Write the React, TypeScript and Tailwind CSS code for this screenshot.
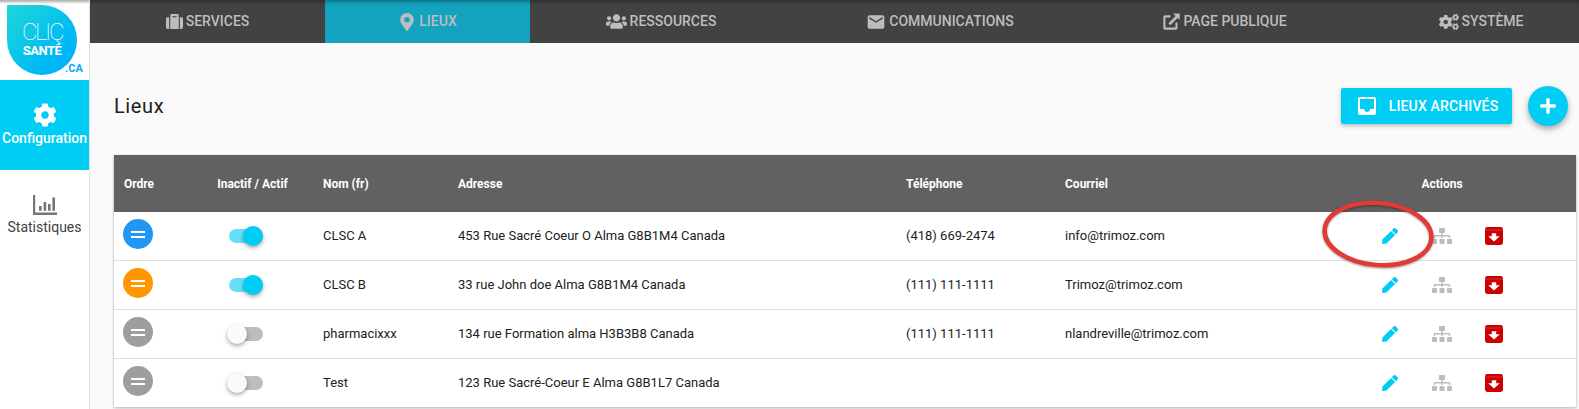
import React from "react";
import { FaSuitcase, FaMapMarkerAlt, FaUsers, FaCogs, FaCog, FaSitemap, FaPen, FaPlus } from "react-icons/fa";
import { MdEmail, MdInbox } from "react-icons/md";

const ExternalIcon = () => (
  <svg width="17" height="17" viewBox="0 0 16 16" fill="none" className="shrink-0">
    <path d="M7 3.2H2.2a.9.9 0 0 0-.9.9v9.7c0 .5.4.9.9.9h9.6c.5 0 .9-.4.9-.9V9" stroke="currentColor" strokeWidth="2" />
    <path d="M6 10.5 13.5 3" stroke="currentColor" strokeWidth="2.6" />
    <path d="M9.5 .4h6.2v6.2z" fill="currentColor" />
  </svg>
);

const StatsIcon = () => (
  <svg width="24" height="20" viewBox="0 0 24 20" className="text-[#757575]" fill="currentColor">
    <path d="M0 0h2.2v17.4H24V20H0z" />
    <path d="M6 11h2.6v4.8H6zM10.6 7h2.6v8.8h-2.6zM15 9h2.6v6.8H15zM19.4 2.5H22v13.3h-2.6z" />
  </svg>
);

const ArchiveIcon = () => (
  <svg width="18" height="18" viewBox="0 0 18 18" className="shrink-0">
    <rect width="18" height="18" rx="2.4" fill="#cc0000" />
    <path d="M6.8 6.2h4.4v3h3.6L9 14.6 3.2 9.2h3.6z" fill="#fff" />
    <path d="M0 3h18" stroke="#e06060" strokeWidth="0.5" />
  </svg>
);

const navItems = [
  { label: "SERVICES", icon: <FaSuitcase size={17} />, w: "w-[235px]" },
  { label: "LIEUX", icon: <FaMapMarkerAlt size={18} />, w: "w-[205px]", active: true },
  { label: "RESSOURCES", icon: <FaUsers size={21} />, w: "w-[262px]" },
  { label: "COMMUNICATIONS", icon: <MdEmail size={20} />, w: "w-[296px]" },
  { label: "PAGE PUBLIQUE", icon: <ExternalIcon />, w: "w-[274px]" },
  { label: "SYSTÈME", icon: <FaCogs size={20} />, w: "w-[238px]" },
];

const rows = [
  { color: "bg-[#2196f3]", on: true, name: "CLSC A", addr: "453 Rue Sacré Coeur O Alma G8B1M4 Canada", tel: "(418) 669-2474", mail: "info@trimoz.com" },
  { color: "bg-[#ff9800]", on: true, name: "CLSC B", addr: "33 rue John doe Alma G8B1M4 Canada", tel: "(111) 111-1111", mail: "Trimoz@trimoz.com" },
  { color: "bg-[#9e9e9e]", on: false, name: "pharmacixxx", addr: "134 rue Formation alma H3B3B8 Canada", tel: "(111) 111-1111", mail: "nlandreville@trimoz.com" },
  { color: "bg-[#9e9e9e]", on: false, name: "Test", addr: "123 Rue Sacré-Coeur E Alma G8B1L7 Canada", tel: "", mail: "" },
];

const cols = "grid grid-cols-[86px_105px_153px_448px_159px_299px_156px_56px] items-center";

const Toggle = ({ on }: { on: boolean }) => (
  <div className="relative ml-[29px] h-[14px] w-[34px] rounded-full">
    <div className={`h-[14px] w-[34px] rounded-full ${on ? "bg-[#66e0f7]" : "bg-[#bdbdbd]"}`} />
    <div
      className={`absolute top-[-3px] h-[20px] w-[20px] rounded-full shadow-[0_2px_4px_rgba(0,0,0,0.35)] ${
        on ? "right-0 bg-[#00cdf3]" : "left-[-2px] bg-[#fafafa]"
      }`}
    />
  </div>
);

export default function App() {
  return (
    <div className="flex h-[409px] w-[1579px] overflow-hidden bg-[#fafafa] font-['Roboto',sans-serif] text-[#212121]">
      <aside className="flex w-[90px] shrink-0 flex-col border-r border-[#e0e0e0] bg-white">
        <div className="relative h-[80px] shrink-0">
          <div className="absolute left-[7px] top-[5px] flex h-[70px] w-[70px] flex-col items-center rounded-full rounded-tl-none bg-gradient-to-br from-[#1fd8d8] to-[#00aaff] pt-[15px] text-white">
            <span className="text-[24px] font-thin leading-[24px] tracking-[-2.4px]">CLIÇ</span>
            <span className="text-[13px] font-bold leading-[13px] tracking-[-0.5px]">SANTÉ</span>
          </div>
          <span className="absolute left-[65px] top-[63px] text-[11px] font-bold leading-[12px] text-[#00aaff]">.CA</span>
          <div className="absolute inset-x-0 top-0 h-[4px] bg-gradient-to-b from-[#00000055] to-transparent" />
        </div>
        <div className="flex h-[90px] shrink-0 flex-col items-center bg-[#00cdf3] pt-[23px] text-white">
          <FaCog size={24} />
          <span className="mt-[1px] text-[14px] font-medium leading-[20px]">Configuration</span>
        </div>
        <div className="flex flex-col items-center pt-[25px]">
          <StatsIcon />
          <span className="mt-[3px] text-[14px] leading-[18px] text-[#424242]">Statistiques</span>
        </div>
      </aside>

      <main className="min-w-0 flex-1">
        <nav className="flex h-[43px] bg-[#424242] shadow-[inset_0_4px_4px_-3px_rgba(0,0,0,0.45)]">
          {navItems.map((n) => (
            <div
              key={n.label}
              className={`flex shrink-0 items-center justify-center gap-[3px] text-[14px] font-medium text-[#bdbdbd] ${n.w} ${
                n.active ? "bg-[#14a3bf] shadow-[inset_0_4px_4px_-3px_rgba(0,0,0,0.45)]" : ""
              }`}
            >
              {n.icon}
              <span>{n.label}</span>
            </div>
          ))}
        </nav>

        <div className="pl-[24px] pr-[3px]">
          <div className="flex h-[112px] items-center justify-between pt-[14px]">
            <h1 className="text-[20px] leading-[28px] tracking-[0.6px]">Lieux</h1>
            <div className="flex items-center gap-[16px] pr-[8px]">
              <button className="flex h-[36px] w-[171px] items-center justify-center gap-[10px] rounded-[2px] bg-[#00cdf3] text-[14px] font-medium tracking-[0.15px] text-white shadow-[0_2px_4px_rgba(0,0,0,0.25)]">
                <MdInbox size={24} />
                <span>LIEUX ARCHIVÉS</span>
              </button>
              <button className="flex h-[40px] w-[40px] items-center justify-center rounded-full bg-[#00cdf3] text-white shadow-[0_3px_6px_rgba(0,0,0,0.35)]">
                <FaPlus size={18} />
              </button>
            </div>
          </div>

          <div className="bg-white shadow-[0_1px_3px_rgba(0,0,0,0.3)]">
            <div className={`${cols} h-[57px] bg-[#616161] text-[12px] font-bold text-white`}>
              <div className="pl-[10px]">Ordre</div>
              <div className="text-center">Inactif / Actif</div>
              <div className="pl-[18px]">Nom (fr)</div>
              <div>Adresse</div>
              <div>Téléphone</div>
              <div>Courriel</div>
              <div className="text-center">Actions</div>
              <div />
            </div>
            {rows.map((r, i) => (
              <div key={r.name} className={`${cols} text-[13px] ${i < rows.length - 1 ? "h-[49px] border-b border-[#e0e0e0]" : "h-[48px]"}`}>
                <div className="pl-[9px]">
                  <div className={`mb-[4px] flex h-[30px] w-[30px] flex-col items-center justify-center gap-[3px] rounded-full ${r.color}`}>
                    <span className="h-[2px] w-[14px] bg-white" />
                    <span className="h-[2px] w-[14px] bg-white" />
                  </div>
                </div>
                <div><Toggle on={r.on} /></div>
                <div className="pl-[18px]">{r.name}</div>
                <div>{r.addr}</div>
                <div>{r.tel}</div>
                <div>{r.mail}</div>
                <div className="grid grid-cols-3 items-center justify-items-center">
                  <FaPen size={16} className="text-[#00cdf3]" />
                  <FaSitemap size={20} className="text-[#bdbdbd]" />
                  <ArchiveIcon />
                </div>
                <div />
              </div>
            ))}
          </div>
        </div>
      </main>

      <svg className="pointer-events-none absolute left-[1316px] top-[194px] drop-shadow-[0_1px_1px_rgba(0,0,0,0.4)]" width="124" height="80" viewBox="0 0 124 80" fill="none">
        <ellipse cx="62" cy="40" rx="53.5" ry="31" transform="rotate(5 62 40)" stroke="#e53935" strokeWidth="4.5" />
      </svg>
    </div>
  );
}
